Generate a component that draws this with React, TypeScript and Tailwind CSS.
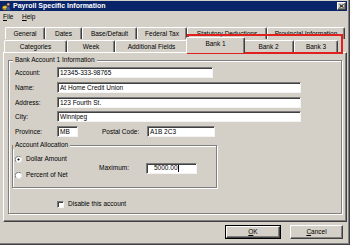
import React from "react";

const row1: [string, string][] = [
  ["General", "w-[40px]"],
  ["Dates", "w-[37px]"],
  ["Base/Default", "w-[55px]"],
  ["Federal Tax", "w-[50px]"],
  ["Statutory Deductions", "w-[80px]"],
  ["Provincial Information", "w-[78px]"],
];

const row2: [string, string][] = [
  ["Categories", "w-[63px]"],
  ["Week", "w-[48px]"],
  ["Additional Fields", "w-[73px]"],
  ["Bank 1", "w-[59px]"],
  ["Bank 2", "w-[51px]"],
  ["Bank 3", "w-[44px]"],
];

const raised =
  "border-t border-l border-white border-r border-b border-r-[#404040] border-b-[#404040] shadow-[inset_-1px_-1px_0_#808080]";
const sunken =
  "bg-white border-t border-l border-[#7a7a7a] border-r border-b border-r-[#f4f4f4] border-b-[#f4f4f4] shadow-[inset_1px_1px_0_#404040]";

const AppIcon = () => (
  <svg width="9" height="9" viewBox="0 0 9 9">
    <ellipse cx="3" cy="6.5" rx="2.6" ry="1.6" fill="#d9a520" stroke="#7a5a10" strokeWidth="0.6" />
    <ellipse cx="3" cy="5.3" rx="2.6" ry="1.6" fill="#f2cc40" stroke="#7a5a10" strokeWidth="0.6" />
    <circle cx="6.3" cy="2.4" r="1.4" fill="#e8b88a" stroke="#5a3a20" strokeWidth="0.5" />
    <path d="M4.4 8.6 C4.6 5.6 5.2 4.2 6.3 4.2 C7.4 4.2 8 5.6 8.4 8.6 Z" fill="#3a5aa8" stroke="#1a2a60" strokeWidth="0.5" />
  </svg>
);

const Radio = ({ checked }: { checked?: boolean }) => (
  <svg width="7" height="7" viewBox="0 0 7 7">
    <circle cx="3.5" cy="3.5" r="3" fill="#fff" />
    <path d="M1.2 5.8 A3 3 0 0 1 5.8 1.2" fill="none" stroke="#707070" strokeWidth="0.9" />
    <path d="M5.8 1.2 A3 3 0 0 1 1.2 5.8" fill="none" stroke="#e8e8e8" strokeWidth="0.9" />
    {checked && <circle cx="3.5" cy="3.5" r="1.1" fill="#000" />}
  </svg>
);

const Tab = ({ label, w }: { label: string; w: string }) => (
  <div
    className={`${w} h-[12px] flex items-center justify-center rounded-t-[2px] border-t border-l border-white border-r border-r-[#404040] shadow-[inset_-1px_0_0_#808080] whitespace-nowrap`}
  >
    {label}
  </div>
);

const Row = ({ label, className, children }: { label: string; className: string; children: React.ReactNode }) => (
  <div className={`flex items-center h-[11px] ${className}`}>
    <div className="w-[48px] pl-[6px]">{label}</div>
    {children}
  </div>
);

const Box = ({ w, children }: { w: string; children?: React.ReactNode }) => (
  <div className={`${w} h-[11px] ${sunken} flex items-center pl-[2px] whitespace-nowrap`}>{children}</div>
);

export default function App() {
  return (
    <div className="relative w-[350px] h-[245px] overflow-hidden bg-[#d4d0c8] font-['Liberation_Sans',Arial,sans-serif] text-[6.5px] leading-[8px] text-black shadow-[inset_-1px_-1px_0_#404040,inset_-2px_-2px_0_#808080]">
      <div className="w-[347px] flex flex-col">
        {/* title bar */}
        <div className="mt-[1px] h-[10px] bg-[#0a246a] flex items-center pl-[2px] pr-[1px]">
          <AppIcon />
          <span className="ml-[2px] text-white font-bold text-[7px]">Payroll Specific Information</span>
          <div className={`ml-auto w-[9px] h-[8px] bg-[#d4d0c8] flex items-center justify-center ${raised}`}>
            <svg width="5" height="4" viewBox="0 0 5 4">
              <path d="M0.5 0.3 L4.5 3.7 M4.5 0.3 L0.5 3.7" stroke="#000" strokeWidth="1" />
            </svg>
          </div>
        </div>

        {/* menu */}
        <div className="h-[12px] flex items-center pl-[3px]">
          <span className="w-[19px]">
            <span className="underline">F</span>ile
          </span>
          <span>
            <span className="underline">H</span>elp
          </span>
        </div>

        {/* tabs */}
        <div className="mt-[4px] h-[25px] flex flex-col">
          <div className="flex h-[12px] pl-[5px]">
            {row1.map(([l, w]) => (
              <Tab key={l} label={l} w={w} />
            ))}
          </div>
          <div className="flex h-[13px] items-end pl-[4px]">
            {row2.map(([l, w]) =>
              l === "Bank 1" ? (
                <div
                  key={l}
                  className={`${w} relative z-10 -mx-[2px] -mb-[1px] h-[16px] pb-[3px] bg-[#d4d0c8] flex items-center justify-center rounded-t-[2px] border-t border-l border-white border-r border-r-[#404040] shadow-[inset_-1px_0_0_#808080]`}
                >
                  {l}
                </div>
              ) : (
                <Tab key={l} label={l} w={w} />
              )
            )}
          </div>
        </div>

        {/* panel */}
        <div className={`ml-[3px] w-[344px] h-[170px] flex flex-col ${raised}`}>
          <fieldset className="mx-[4px] mt-[3px] border border-[#808080] shadow-[inset_1px_1px_0_#fff,1px_1px_0_#fff] pb-[4px]">
            <legend className="ml-[4px] px-[2px] bg-[#d4d0c8] leading-[8px]">Bank Account 1 Information</legend>

            <Row label="Account:" className="mt-[3px]">
              <Box w="w-[156px]">12345-333-98765</Box>
            </Row>
            <Row label="Name:" className="mt-[4px]">
              <Box w="w-[244px]">At Home Credit Union</Box>
            </Row>
            <Row label="Address:" className="mt-[4px]">
              <Box w="w-[244px]">123 Fourth St.</Box>
            </Row>
            <Row label="City:" className="mt-[3px]">
              <Box w="w-[244px]">Winnipeg</Box>
            </Row>
            <Row label="Province:" className="mt-[4px]">
              <Box w="w-[21px]">MB</Box>
              <div className="ml-[24px] w-[45px]">Postal Code:</div>
              <Box w="w-[68px]">A1B 2C3</Box>
            </Row>

            <fieldset className="ml-[3px] mt-[4px] w-[205px] border border-[#808080] shadow-[inset_1px_1px_0_#fff,1px_1px_0_#fff]">
              <legend className="ml-[0px] px-[2px] bg-[#d4d0c8] leading-[8px]">Account Allocation</legend>
              <div className="flex items-center">
                <div className="w-[86px] pl-[2px] mt-[5px] mb-[7px] flex flex-col gap-[6px]">
                  <div className="h-[10px] flex items-center gap-[4px]">
                    <Radio checked />
                    <span>Dollar Amount</span>
                  </div>
                  <div className="h-[10px] flex items-center gap-[4px]">
                    <Radio />
                    <span>Percent of Net</span>
                  </div>
                </div>
                <div className="w-[47px]">Maximum:</div>
                <div className={`w-[51px] h-[11px] ${sunken} flex items-center pl-[7px]`}>
                  <span>5000.00</span>
                  <span className="w-[1px] h-[7px] bg-black" />
                </div>
              </div>
            </fieldset>

            <div className="mt-[11px] h-[10px] flex items-center pl-[48px]">
              <div className={`w-[7px] h-[7px] ${sunken}`} />
              <span className="ml-[4px]">Disable this account</span>
            </div>
          </fieldset>
        </div>

        {/* buttons */}
        <div className="mt-[3px] flex justify-end pr-[4px] gap-[9px]">
          <div className="w-[56px] h-[14px] border border-black">
            <div className={`w-full h-full flex items-center justify-center ${raised}`}>
              <span>
                <span className="underline">O</span>K
              </span>
            </div>
          </div>
          <div className={`w-[53px] h-[14px] flex items-center justify-center ${raised}`}>
            <span>
              <span className="underline">C</span>ancel
            </span>
          </div>
        </div>
      </div>

      {/* highlight box */}
      <div className="absolute left-[187px] top-[34px] w-[156px] h-[20px] border-2 border-[#e0201c]" />
    </div>
  );
}
